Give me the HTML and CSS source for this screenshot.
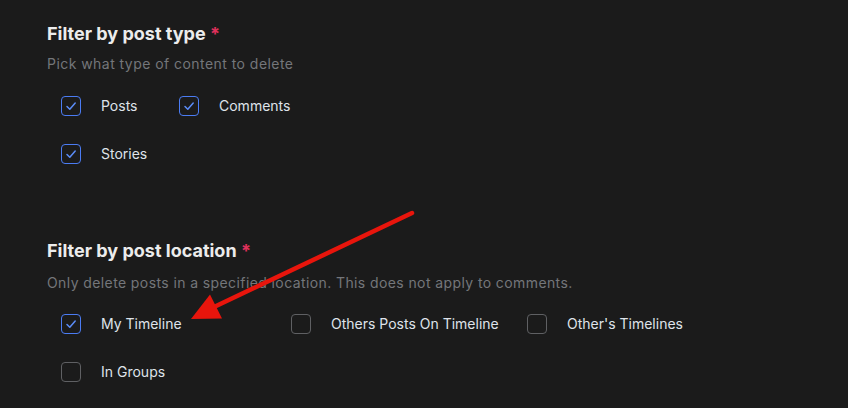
FILE: index.html
```html
<!DOCTYPE html>
<html>
<head>
<meta charset="utf-8">
<link rel="stylesheet" href="styles.css">
</head>
<body>
<div class="page">
  <section class="section">
    <h2 class="title">Filter by post type <span class="req">*</span></h2>
    <p class="desc">Pick what type of content to delete</p>
    <div class="options">
      <div class="row">
        <label class="opt w118"><span class="box checked"><svg viewBox="0 0 20 20"><path d="M6 10.5l2.8 2.8L14.2 7"/></svg></span><span class="lbl">Posts</span></label>
        <label class="opt"><span class="box checked"><svg viewBox="0 0 20 20"><path d="M6 10.5l2.8 2.8L14.2 7"/></svg></span><span class="lbl">Comments</span></label>
      </div>
      <div class="row">
        <label class="opt"><span class="box checked"><svg viewBox="0 0 20 20"><path d="M6 10.5l2.8 2.8L14.2 7"/></svg></span><span class="lbl">Stories</span></label>
      </div>
    </div>
  </section>
  <section class="section second">
    <h2 class="title">Filter by post location <span class="req">*</span></h2>
    <p class="desc">Only delete posts in a specified location. This does not apply to comments.</p>
    <div class="options">
      <div class="row">
        <label class="opt w230"><span class="box checked"><svg viewBox="0 0 20 20"><path d="M6 10.5l2.8 2.8L14.2 7"/></svg></span><span class="lbl">My Timeline</span></label>
        <label class="opt w236"><span class="box"></span><span class="lbl">Others Posts On Timeline</span></label>
        <label class="opt"><span class="box"></span><span class="lbl">Other's Timelines</span></label>
      </div>
      <div class="row">
        <label class="opt"><span class="box"></span><span class="lbl">In Groups</span></label>
      </div>
    </div>
  </section>
  <svg class="arrow" viewBox="0 0 848 408" width="848" height="408">
    <line x1="412" y1="213" x2="214" y2="307" stroke="#e8150c" stroke-width="4.5" stroke-linecap="round"/>
    <polygon points="191,319 210,294.5 222,318.5" fill="#e8150c"/>
  </svg>
</div>
</body>
</html>
```
FILE: styles.css
```css
html, body {
  margin: 0;
  padding: 0;
  background: #1b1b1b;
}
.page {
  position: relative;
  width: 848px;
  height: 408px;
  overflow: hidden;
  padding: 22px 0 0 47px;
  box-sizing: border-box;
  font-family: Inter, "Noto Sans", sans-serif;
}
.section {
  margin: 0;
}
.second {
  margin-top: 61px;
}
.title {
  margin: 0;
  font-size: 18px;
  line-height: 24px;
  font-weight: 700;
  color: #ececec;
}
.req {
  color: #e0315c;
}
.desc {
  margin: 8px 0 0;
  font-size: 14px;
  line-height: 20px;
  color: #74767a;
  letter-spacing: 0.45px;
}
.second .desc {
  margin-top: 10px;
  letter-spacing: 0.4px;
}
.options {
  margin-top: 8px;
  padding-left: 14px;
}
.second .options {
  margin-top: 7px;
}
.row {
  display: flex;
  height: 48px;
  align-items: center;
}
.opt {
  display: flex;
  align-items: center;
  gap: 20px;
}
.w118 { width: 118px; }
.w230 { width: 230px; }
.w236 { width: 236px; }
.box {
  width: 20px;
  height: 20px;
  box-sizing: border-box;
  border: 1.5px solid #5f6063;
  border-radius: 4px;
  display: flex;
  align-items: center;
  justify-content: center;
}
.box.checked {
  border-color: #4b7cf3;
}
.box svg {
  width: 20px;
  height: 20px;
  flex: none;
  margin: -1.5px;
}
.box svg path {
  fill: none;
  stroke: #5b8cf7;
  stroke-width: 1.5;
  stroke-linecap: round;
  stroke-linejoin: round;
}
.lbl {
  font-size: 14px;
  line-height: 20px;
  color: #dfe3ea;
}
.arrow {
  position: absolute;
  left: 0;
  top: 0;
}
```
